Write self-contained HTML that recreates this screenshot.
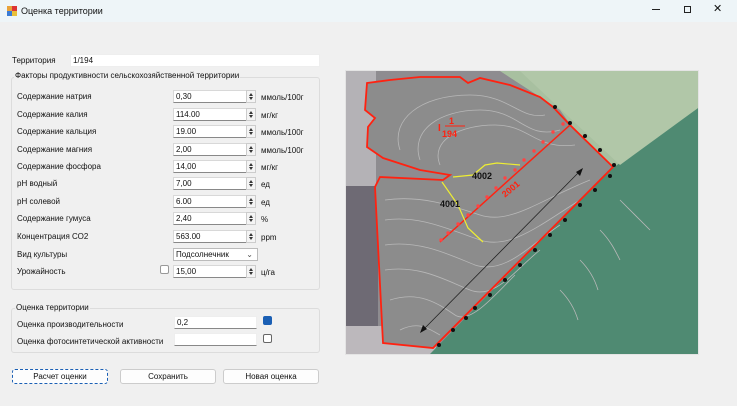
<!DOCTYPE html>
<html><head><meta charset="utf-8"><style>
*{box-sizing:border-box;margin:0;padding:0}
body{width:737px;height:406px;background:#f0f0f0;font-family:"Liberation Sans",sans-serif;font-size:8px;color:#111;position:relative;overflow:hidden}
.a{position:absolute;white-space:nowrap}
.tb{position:absolute;left:0;top:0;width:737px;height:22px;background:#eef5f8}
.inp{position:absolute;background:#fff;border:1px solid #d8d8d8;border-bottom-color:#888;height:13px;padding-left:2px;line-height:11px;font-size:8px}
.sp{position:absolute;width:10px;height:13px;background:#f4f4f4;border:1px solid #ccc}
.sp:before{content:"";position:absolute;left:2px;top:2px;border:2.5px solid transparent;border-bottom:3px solid #333;border-top:0}
.sp:after{content:"";position:absolute;left:2px;bottom:2px;border:2.5px solid transparent;border-top:3px solid #333;border-bottom:0}
.grp{position:absolute;border:1px solid #dcdcdc;border-radius:3px}
.cb{position:absolute;width:9px;height:9px;border:1px solid #666;border-radius:2px;background:#fff}
.btn{position:absolute;height:15px;background:#fdfdfd;border:1px solid #ccc;border-radius:3px;text-align:center;line-height:13px;font-size:8px}
</style></head><body>
<div class="tb"></div>
<svg class="a" style="left:7px;top:6px" width="10" height="10"><rect x="0" y="0" width="5" height="5" fill="#e8a23a"/><rect x="5" y="0" width="5" height="5" fill="#d33"/><rect x="0" y="5" width="5" height="5" fill="#3a7bd5"/><rect x="5" y="5" width="5" height="5" fill="#e8c03a"/></svg>
<div class="a" style="left:21px;top:6px;font-size:9px">Оценка территории</div>
<div class="a" style="left:652px;top:9px;width:8px;height:1px;background:#222"></div>
<div class="a" style="left:684px;top:6px;width:7px;height:7px;border:1px solid #222"></div>
<div class="a" style="left:713px;top:2px;font-size:11px">✕</div>

<div class="a" style="left:12px;top:56px">Территория</div>
<div class="inp" style="left:70px;top:54px;width:250px;border-color:#eee">1/194</div>
<div class="grp" style="left:11px;top:77px;width:309px;height:213px"></div>
<div class="a" style="left:14px;top:71px;background:#f0f0f0;padding:0 1px">Факторы продуктивности сельскохозяйственной территории</div>

<div class="a" style="left:17px;top:92px">Содержание натрия</div><div class="inp" style="left:173px;top:90px;width:75px">0,30</div><div class="sp" style="left:246px;top:90px"></div><div class="a" style="left:261px;top:93px">ммоль/100г</div>
<div class="a" style="left:17px;top:110px">Содержание калия</div><div class="inp" style="left:173px;top:108px;width:75px">114.00</div><div class="sp" style="left:246px;top:108px"></div><div class="a" style="left:261px;top:111px">мг/кг</div>
<div class="a" style="left:17px;top:127px">Содержание кальция</div><div class="inp" style="left:173px;top:125px;width:75px">19.00</div><div class="sp" style="left:246px;top:125px"></div><div class="a" style="left:261px;top:128px">ммоль/100г</div>
<div class="a" style="left:17px;top:145px">Содержание магния</div><div class="inp" style="left:173px;top:143px;width:75px">2,00</div><div class="sp" style="left:246px;top:143px"></div><div class="a" style="left:261px;top:146px">ммоль/100г</div>
<div class="a" style="left:17px;top:162px">Содержание фосфора</div><div class="inp" style="left:173px;top:160px;width:75px">14,00</div><div class="sp" style="left:246px;top:160px"></div><div class="a" style="left:261px;top:163px">мг/кг</div>
<div class="a" style="left:17px;top:179px">pH водный</div><div class="inp" style="left:173px;top:177px;width:75px">7,00</div><div class="sp" style="left:246px;top:177px"></div><div class="a" style="left:261px;top:180px">ед</div>
<div class="a" style="left:17px;top:197px">pH солевой</div><div class="inp" style="left:173px;top:195px;width:75px">6.00</div><div class="sp" style="left:246px;top:195px"></div><div class="a" style="left:261px;top:198px">ед</div>
<div class="a" style="left:17px;top:214px">Содержание гумуса</div><div class="inp" style="left:173px;top:212px;width:75px">2,40</div><div class="sp" style="left:246px;top:212px"></div><div class="a" style="left:261px;top:215px">%</div>
<div class="a" style="left:17px;top:232px">Концентрация СО2</div><div class="inp" style="left:173px;top:230px;width:75px">563.00</div><div class="sp" style="left:246px;top:230px"></div><div class="a" style="left:261px;top:233px">ppm</div>
<div class="a" style="left:17px;top:250px">Вид культуры</div><div class="inp" style="left:173px;top:248px;width:85px;border-color:#bbb">Подсолнечник<span style="position:absolute;right:4px;top:0;color:#555">⌄</span></div>
<div class="a" style="left:17px;top:267px">Урожайность</div><div class="cb" style="left:160px;top:265px;border-color:#999"></div><div class="inp" style="left:173px;top:265px;width:75px">15,00</div><div class="sp" style="left:246px;top:265px"></div><div class="a" style="left:261px;top:268px">ц/га</div>

<div class="grp" style="left:11px;top:308px;width:309px;height:45px"></div>
<div class="a" style="left:15px;top:303px;background:#f0f0f0;padding:0 1px">Оценка территории</div>
<div class="a" style="left:17px;top:320px">Оценка производительности</div><div class="inp" style="left:174px;top:316px;width:83px;border-color:#eee #eee #888">0,2</div>
<div class="cb" style="left:263px;top:316px;background:#1a5fb4;border-color:#1a5fb4"></div>
<div class="a" style="left:17px;top:337px">Оценка фотосинтетической активности</div><div class="inp" style="left:174px;top:333px;width:83px;border-color:#eee #eee #888"></div>
<div class="cb" style="left:263px;top:334px"></div>

<div class="btn" style="left:12px;top:369px;width:96px;border:1px dashed #1a5fb4">Расчет оценки</div>
<div class="btn" style="left:120px;top:369px;width:96px">Сохранить</div>
<div class="btn" style="left:223px;top:369px;width:96px">Новая оценка</div>

<svg class="a" style="left:0;top:0" width="737" height="406">
<defs><clipPath id="c"><rect x="346" y="71" width="352" height="283"/></clipPath></defs>
<rect x="345" y="70" width="354" height="285" fill="#e4e4e4"/>
<g clip-path="url(#c)">
<rect x="346" y="71" width="352" height="283" fill="#8e8c90"/>
<rect x="346" y="71" width="30" height="115" fill="#b4b2b6"/>
<rect x="346" y="186" width="32" height="140" fill="#6e6a74"/>
<rect x="346" y="326" width="90" height="28" fill="#bcb8bc"/>
<polygon points="500,71 698,71 698,120 610,180 560,110" fill="#a8c0a0"/>
<polygon points="610,170 698,108 698,354 430,354" fill="#4f8a72"/>
<polygon points="520,71 698,71 698,108 620,165" fill="#b1c7a8"/>
<polygon points="367,83 390,80 420,77 460,77 468,83 480,78 510,85 540,97 553,107 570,125 613,167 433,348 383,343 375,187 380,177 443,180 450,175 420,170 383,158 367,147 368,127 375,118 365,110" fill="#8c8c8c"/>
<g fill="none" stroke="#b8b8b8" stroke-width="0.8">
<path d="M400,150 C390,120 420,95 470,95 C510,95 520,120 545,115"/>
<path d="M420,160 C410,130 440,110 480,110 C520,110 525,140 560,130"/>
<path d="M440,165 C430,140 460,125 495,125 C530,125 535,150 575,145"/>
<path d="M385,200 C420,195 450,205 480,215 C510,225 540,200 590,180"/>
<path d="M385,220 C420,215 450,230 480,240 C510,250 540,225 580,200"/>
<path d="M385,245 C420,240 450,255 475,265 C505,275 530,245 560,225"/>
<path d="M385,270 C420,265 445,280 470,290 C495,300 515,270 540,250"/>
<path d="M390,300 C420,290 440,305 455,315 C470,325 495,295 515,275"/>
<path d="M400,330 C420,320 430,330 440,335"/>
<path d="M620,200 C630,210 640,220 650,230"/>
<path d="M600,230 C610,240 615,250 620,260"/>
<path d="M580,260 C590,270 595,280 598,290"/>
<path d="M560,290 C570,300 575,310 578,320"/>
</g>
<polygon points="367,83 390,80 420,77 460,77 468,83 480,78 510,85 540,97 553,107 570,125 613,167 433,348 383,343 375,187 380,177 443,180 450,175 420,170 383,158 367,147 368,127 375,118 365,110" fill="none" stroke="#f21" stroke-width="1.8"/>
<line x1="440" y1="242" x2="570" y2="125" stroke="#f21" stroke-width="1.5"/>
<g fill="#f44">
<circle cx="441" cy="240" r="1.7"/><circle cx="448" cy="233" r="1.7"/><circle cx="458" cy="224" r="1.7"/><circle cx="468" cy="215" r="1.7"/><circle cx="478" cy="206" r="1.7"/><circle cx="487" cy="197" r="1.7"/><circle cx="496" cy="188" r="1.7"/><circle cx="505" cy="178" r="1.7"/><circle cx="515" cy="170" r="1.7"/><circle cx="524" cy="160" r="1.7"/><circle cx="534" cy="151" r="1.7"/><circle cx="543" cy="142" r="1.7"/><circle cx="553" cy="132" r="1.7"/><circle cx="563" cy="124" r="1.7"/></g>
<g fill="#111">
<circle cx="555" cy="107" r="2"/><circle cx="570" cy="123" r="2"/><circle cx="585" cy="136" r="2"/><circle cx="600" cy="150" r="2"/><circle cx="614" cy="165" r="2"/><circle cx="610" cy="176" r="2"/><circle cx="595" cy="190" r="2"/><circle cx="580" cy="205" r="2"/><circle cx="565" cy="220" r="2"/><circle cx="550" cy="235" r="2"/><circle cx="535" cy="250" r="2"/><circle cx="520" cy="265" r="2"/><circle cx="505" cy="280" r="2"/><circle cx="490" cy="295" r="2"/><circle cx="475" cy="308" r="2"/><circle cx="466" cy="318" r="2"/><circle cx="453" cy="330" r="2"/><circle cx="439" cy="345" r="2"/></g>
<g fill="none" stroke="#ee3" stroke-width="1.2"><path d="M442,182 L458,205 L468,228 L483,242"/><path d="M453,177 L473,175 L485,165 L497,163 L520,165"/></g>
<line x1="422" y1="331" x2="581" y2="170" stroke="#222" stroke-width="0.8"/>
<polygon points="583,168 576,172 580,176" fill="#111"/><polygon points="420,333 427,329 423,325" fill="#111"/>
</g>
<text x="472" y="179" font-family="Liberation Sans" font-size="9" font-weight="bold" fill="#111">4002</text>
<text x="440" y="207" font-family="Liberation Sans" font-size="9" font-weight="bold" fill="#111">4001</text>
<text x="500" y="196" font-family="Liberation Sans" font-size="9" font-weight="bold" fill="#f21" transform="rotate(-40 505 190)">2001</text>
<text x="438" y="131" font-family="Liberation Sans" font-size="10" font-weight="bold" fill="#f21">I</text>
<text x="449" y="124" font-family="Liberation Sans" font-size="9" font-weight="bold" fill="#f21">1</text>
<line x1="445" y1="126" x2="465" y2="126" stroke="#f21" stroke-width="1"/>
<text x="442" y="137" font-family="Liberation Sans" font-size="9" font-weight="bold" fill="#f21">194</text>
</svg>
</body></html>
